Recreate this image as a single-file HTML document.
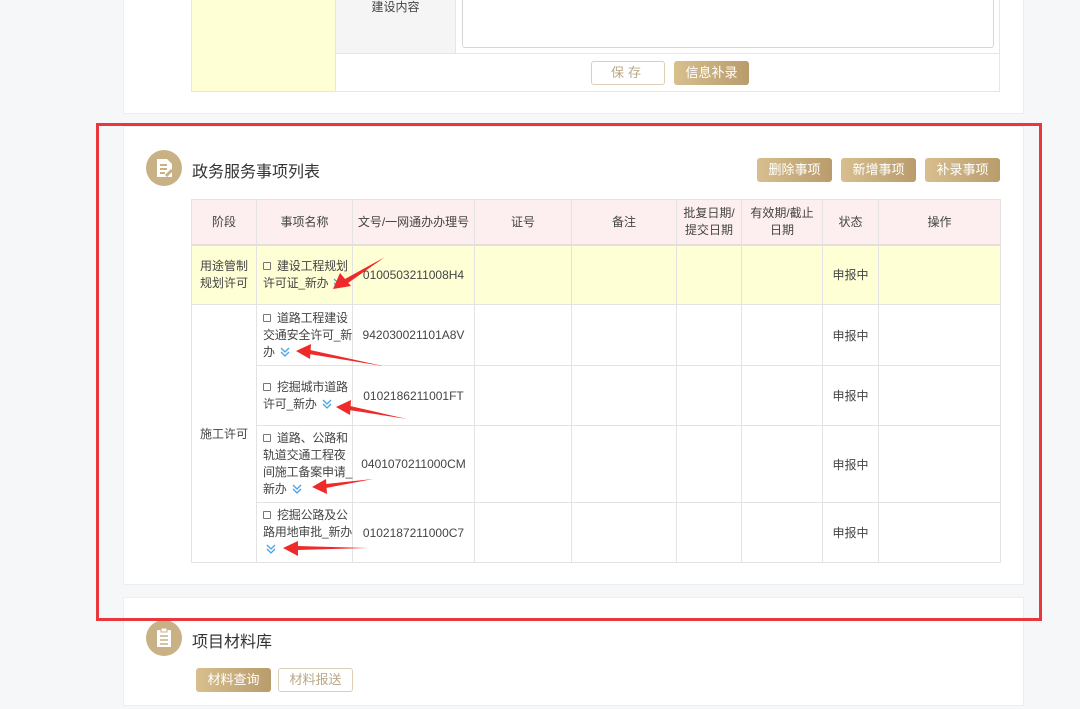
<!DOCTYPE html>
<html><head><meta charset="utf-8"><style>
*{margin:0;padding:0;box-sizing:border-box}
body{width:1080px;height:709px;background:#f6f7f9;font-family:"Liberation Sans","Noto Sans CJK SC",sans-serif;color:#333;position:relative;overflow:hidden;font-size:12px}
.panel{position:absolute;left:123px;width:901px;background:#fff;border:1px solid #eceef1}
.abs{position:absolute}
.btn{position:absolute;height:24px;line-height:24px;text-align:center;font-size:13px;color:#fff;border-radius:3px;background:linear-gradient(90deg,#d8bf8e,#b99c6c)}
.btno{position:absolute;height:24px;line-height:22px;text-align:center;font-size:13px;color:#b8a888;border:1px solid #dccfb5;border-radius:3px;background:#fff}
table{position:absolute;left:191px;top:199px;border-collapse:collapse;table-layout:fixed;width:809px}
td{border:1px solid #e3e3e3;text-align:center;font-size:12px;color:#444;vertical-align:middle}
tr.h td{background:#fdeef0;border-bottom:2px solid #e8dcdc}
tr.y td{background:#ffffd6}
td.n{text-align:left;padding-left:6px;padding-right:0;line-height:17px;white-space:nowrap;letter-spacing:-0.2px}
.cb{display:inline-block;width:8px;height:8px;border:1px solid #777;border-radius:1px;margin-right:6px;vertical-align:0}
.chev{display:inline-block;width:12px;height:12px;vertical-align:-2px;margin-left:4px}
.ico{position:absolute;width:36px;height:36px;border-radius:50%;background:#c8b185}
</style></head><body>
<div class="panel" style="top:-2px;height:116px"></div>
<div class="abs" style="left:191px;top:0;width:145px;height:92px;background:#ffffd6;border:1px solid #e6e6e6;border-top:none"></div>
<div class="abs" style="left:335px;top:0;width:665px;height:92px;border:1px solid #e6e6e6;border-top:none"></div>
<div class="abs" style="left:336px;top:0;width:120px;height:53px;background:#f5f5f5;border-right:1px solid #e6e6e6;text-align:center;font-size:12px;line-height:14px;color:#444;padding-top:0">建设内容</div>
<div class="abs" style="left:336px;top:53px;width:663px;height:1px;background:#e6e6e6"></div>
<div class="abs" style="left:462px;top:-2px;width:532px;height:50px;border:1px solid #d6d6d6;border-radius:3px;background:#fff"></div>
<div class="btno" style="left:591px;top:61px;width:74px;letter-spacing:4px">保存</div>
<div class="btn" style="left:674px;top:61px;width:75px">信息补录</div>

<div class="panel" style="top:126px;height:459px"></div>
<div class="ico" style="left:146px;top:150px"><svg width="36" height="36" viewBox="0 0 36 36"><path d="M11 9h10l5 5v13H11z" fill="#fff"/><path d="M14 15h7M14 19h7M14 23h5" stroke="#c8b185" stroke-width="2"/><path d="M20 26l6-6" stroke="#c8b185" stroke-width="3"/></svg></div>
<div class="abs" style="left:192px;top:158px;font-size:16px;color:#333">政务服务事项列表</div>
<div class="btn" style="left:757px;top:158px;width:75px">删除事项</div>
<div class="btn" style="left:841px;top:158px;width:75px">新增事项</div>
<div class="btn" style="left:925px;top:158px;width:75px">补录事项</div>

<table>
<colgroup><col style="width:65px"><col style="width:96px"><col style="width:122px"><col style="width:97px"><col style="width:105px"><col style="width:65px"><col style="width:81px"><col style="width:56px"><col style="width:122px"></colgroup>
<tr class="h" style="height:45px"><td>阶段</td><td>事项名称</td><td>文号/一网通办办理号</td><td>证号</td><td>备注</td><td style="line-height:17px">批复日期/<br>提交日期</td><td style="line-height:17px">有效期/截止<br>日期</td><td>状态</td><td>操作</td></tr>
<tr class="y" style="height:60px"><td style="line-height:17px">用途管制<br>规划许可</td><td class="n"><span class="cb"></span>建设工程规划<br>许可证_新办<svg class="chev" viewBox="0 0 12 12"><path d="M2 2l4 4 4-4M2 6l4 4 4-4" fill="none" stroke="#4aa3e0" stroke-width="1.3"/></svg></td><td style="font-size:12px">0100503211008H4</td><td></td><td></td><td></td><td></td><td>申报中</td><td></td></tr>
<tr style="height:61px"><td rowspan="4">施工许可</td><td class="n"><span class="cb"></span>道路工程建设<br>交通安全许可_新<br>办<svg class="chev" viewBox="0 0 12 12"><path d="M2 2l4 4 4-4M2 6l4 4 4-4" fill="none" stroke="#4aa3e0" stroke-width="1.3"/></svg></td><td>942030021101A8V</td><td></td><td></td><td></td><td></td><td>申报中</td><td></td></tr>
<tr style="height:60px"><td class="n"><span class="cb"></span>挖掘城市道路<br>许可_新办<svg class="chev" viewBox="0 0 12 12"><path d="M2 2l4 4 4-4M2 6l4 4 4-4" fill="none" stroke="#4aa3e0" stroke-width="1.3"/></svg></td><td>0102186211001FT</td><td></td><td></td><td></td><td></td><td>申报中</td><td></td></tr>
<tr style="height:77px"><td class="n"><span class="cb"></span>道路、公路和<br>轨道交通工程夜<br>间施工备案申请_<br>新办<svg class="chev" viewBox="0 0 12 12"><path d="M2 2l4 4 4-4M2 6l4 4 4-4" fill="none" stroke="#4aa3e0" stroke-width="1.3"/></svg></td><td>0401070211000CM</td><td></td><td></td><td></td><td></td><td>申报中</td><td></td></tr>
<tr style="height:60px"><td class="n"><span class="cb"></span>挖掘公路及公<br>路用地审批_新办<br><svg class="chev" style="margin-left:2px" viewBox="0 0 12 12"><path d="M2 2l4 4 4-4M2 6l4 4 4-4" fill="none" stroke="#4aa3e0" stroke-width="1.3"/></svg></td><td>0102187211000C7</td><td></td><td></td><td></td><td></td><td>申报中</td><td></td></tr>
</table>

<div class="panel" style="top:597px;height:109px"></div>
<div class="ico" style="left:146px;top:620px"><svg width="36" height="36" viewBox="0 0 36 36"><rect x="11" y="10" width="14" height="17" rx="1" fill="#fff"/><rect x="15" y="8" width="6" height="4" fill="#fff" stroke="#c8b185"/><path d="M14 16h8M14 20h8M14 24h8" stroke="#c8b185" stroke-width="1.5"/></svg></div>
<div class="abs" style="left:192px;top:628px;font-size:16px;color:#333">项目材料库</div>
<div class="btn" style="left:196px;top:668px;width:75px">材料查询</div>
<div class="btno" style="left:278px;top:668px;width:75px">材料报送</div>

<svg class="abs" style="left:0;top:0" width="1080" height="709">
<rect x="97.5" y="124.5" width="943" height="495" fill="none" stroke="#e8383d" stroke-width="3"/>
<g fill="#ee2a2a">
<polygon points="385,257 345,279 348,283"/><polygon points="333,289 340,273 351,286"/>
<polygon points="383,366 310,350 309,354"/><polygon points="296,351 311,344 310,359"/>
<polygon points="407,419 350,406 349,410"/><polygon points="336,407 351,400 350,415"/>
<polygon points="373,479 326,484 326,488"/><polygon points="312,487 326,479 327,494"/>
<polygon points="368,548 297,546 297,550"/><polygon points="283,548 298,541 298,556"/>
</g>
</svg>
</body></html>
